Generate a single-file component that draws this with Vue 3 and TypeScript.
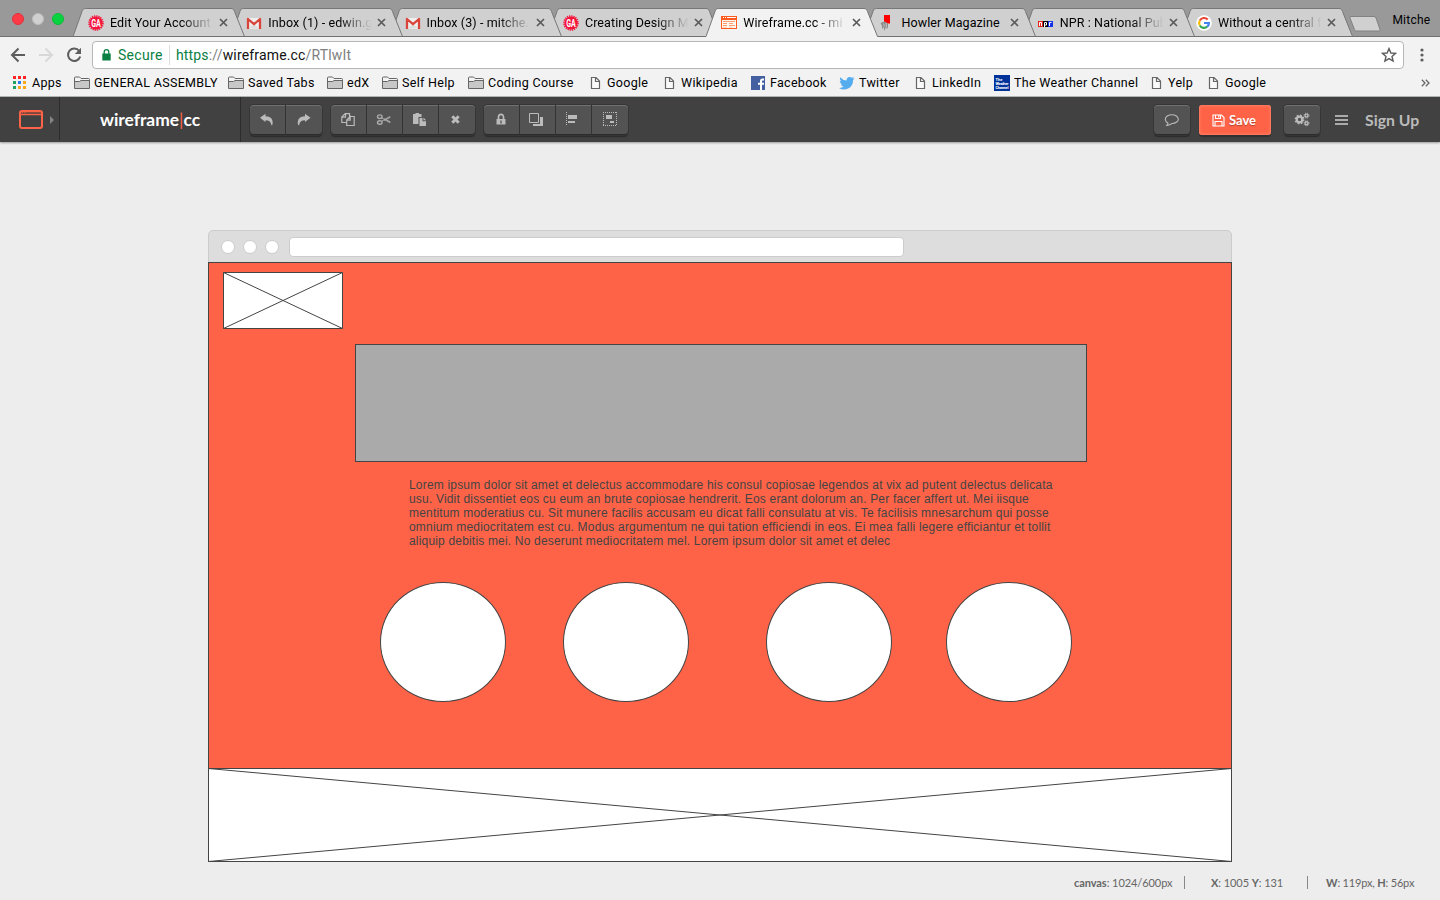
<script setup lang="ts">
interface Tab { title: string; icon: string; active?: boolean }
interface Mark { title: string; icon: string; width: number }

const tabs: Tab[] = [
  { title: 'Edit Your Account', icon: 'ga' },
  { title: 'Inbox (1) - edwin.g', icon: 'gmail' },
  { title: 'Inbox (3) - mitche.', icon: 'gmail' },
  { title: 'Creating Design M', icon: 'ga' },
  { title: 'Wireframe.cc - mi', icon: 'wire', active: true },
  { title: 'Howler Magazine', icon: 'howler' },
  { title: 'NPR : National Pub', icon: 'npr' },
  { title: 'Without a central f', icon: 'google' },
]

const marks: Mark[] = [
  { title: 'Apps', icon: 'apps', width: 61 },
  { title: 'GENERAL ASSEMBLY', icon: 'folder', width: 154 },
  { title: 'Saved Tabs', icon: 'folder', width: 99 },
  { title: 'edX', icon: 'folder', width: 55 },
  { title: 'Self Help', icon: 'folder', width: 86 },
  { title: 'Coding Course', icon: 'folder', width: 122 },
  { title: 'Google', icon: 'page', width: 74 },
  { title: 'Wikipedia', icon: 'page', width: 87 },
  { title: 'Facebook', icon: 'fb', width: 88 },
  { title: 'Twitter', icon: 'tw', width: 76 },
  { title: 'LinkedIn', icon: 'page', width: 79 },
  { title: 'The Weather Channel', icon: 'weather', width: 157 },
  { title: 'Yelp', icon: 'page', width: 57 },
  { title: 'Google', icon: 'page', width: 70 },
]

const groups = [['undo', 'redo'], ['copy', 'cut', 'paste', 'delete'], ['lock', 'order', 'align', 'group']]

const lines = [
  'Lorem ipsum dolor sit amet et delectus accommodare his consul copiosae legendos at vix ad putent delectus delicata',
  'usu. Vidit dissentiet eos cu eum an brute copiosae hendrerit. Eos erant dolorum an. Per facer affert ut. Mei iisque',
  'mentitum moderatius cu. Sit munere facilis accusam eu dicat falli consulatu at vis. Te facilisis mnesarchum qui posse',
  'omnium mediocritatem est cu. Modus argumentum ne qui tation efficiendi in eos. Ei mea falli legere efficiantur et tollit',
  'aliquip debitis mei. No deserunt mediocritatem mel. Lorem ipsum dolor sit amet et delec',
]

const circles = [443, 626, 829, 1009].map((x) => x - 208)
</script>

<template>
  <div class="screen">
    <header class="strip">
      <div class="lights"><i class="red" /><i class="grey" /><i class="green" /></div>
      <div class="tabs">
        <div v-for="(t, i) in tabs" :key="i" class="tab" :class="{ active: t.active }" :style="{ zIndex: t.active ? 20 : 10 - i }">
          <svg class="shape" width="173" height="29" viewBox="0 0 173 29">
            <path d="M0 28.5L9 3.5C9.700 1.500 10.400 .5 12.400 .5H158C160 .5 160.800 1.500 161.500 3.500L171.500 28.500V29H0Z" :fill="t.active ? '#f2f2f2' : '#d0d0d0'" />
            <path d="M0 28.5L9 3.5C9.700 1.500 10.400 .5 12.400 .5H158C160 .5 160.800 1.500 161.500 3.500L171.500 28.500" fill="none" stroke="#777" />
            <path v-if="!t.active" d="M0 28.500H172" stroke="#707070" />
          </svg>
          <span class="fav">
            <svg v-if="t.icon === 'ga'" width="16" height="16" viewBox="0 0 16 16">
              <circle cx="8" cy="8" r="6.6" fill="#f5143c" /><circle cx="8" cy="8" r="7" fill="none" stroke="#f5143c" stroke-width="1.6" stroke-dasharray="1.3 .9" />
              <text x="3.200" y="11.600" textLength="9.600" lengthAdjust="spacingAndGlyphs" class="ga">GA</text>
            </svg>
            <svg v-else-if="t.icon === 'gmail'" width="16" height="16" viewBox="0 0 16 16">
              <path d="M1 3H15V14H1Z" fill="#efefef" /><path d="M3 13.500L8 9L13 13.500Z" fill="#ddd" />
              <path d="M2 14V4L8 9.200L14 4V14" fill="none" stroke="#d9453a" stroke-width="2.300" stroke-linejoin="round" />
            </svg>
            <svg v-else-if="t.icon === 'wire'" width="17" height="16" viewBox="0 0 17 16">
              <path d="M0 1H16V14H0Z" fill="#ff5a1e" /><path d="M1 5H15V13H1Z" fill="#fff6f0" />
              <path d="M2 2.500h1M4 2.500h1M6 2.500h9" stroke="#fff" />
              <path d="M2 6.500H14M2 8.500H6M8 8.500H12M2 10.500H6M8 10.500H14" stroke="#ff9c70" /><path d="M2 12.300H6M8 12.300H11" stroke="#ffc3a5" stroke-width=".8" />
            </svg>
            <svg v-else-if="t.icon === 'howler'" width="16" height="18" viewBox="0 0 16 18">
              <path d="M5 1H11V9.500H8L5 7.500Z" fill="#f00" /><path d="M1.500 9.500Q3.500 7 7 8L9 10V13L8 15L7 12.500L5.500 17L4.500 12.500L3 15.500V11.500Z" fill="#8a8a8a" /><path d="M4.500 9.500L5.500 12.500M7 9L7.500 13" stroke="#ddd" stroke-width=".7" />
            </svg>
            <svg v-else-if="t.icon === 'npr'" width="16" height="16" viewBox="0 0 16 16">
              <path d="M0 6H5V12H0Z" fill="#e1251b" /><path d="M5 6H10V12H5Z" fill="#000" /><path d="M10 6H15V12H10Z" fill="#1733e8" />
              <path d="M1.500 11V7.500H3.500V11M6.500 12V7.500H8.500V10H7M11.500 11V7.500H13.500" fill="none" stroke="#fff" />
            </svg>
            <svg v-else width="16" height="16" viewBox="0 0 16 16">
              <circle cx="8" cy="8" r="7.800" fill="#fff" />
              <g fill="none" stroke-width="2.200"><path d="M11.700 4.600A4.900 4.900 0 0 0 3.800 5.500" stroke="#ea4335" /><path d="M3.800 5.500A4.900 4.900 0 0 0 3.800 10.500" stroke="#fbbc05" /><path d="M3.800 10.500A4.900 4.900 0 0 0 11.200 11.700" stroke="#34a853" /><path d="M11.200 11.700A4.900 4.900 0 0 0 12.900 8H8" stroke="#4285f4" /></g>
            </svg>
          </span>
          <span class="title" :class="{ whole: t.icon === 'howler' }">{{ t.title }}</span>
          <svg class="close" width="9" height="9" viewBox="0 0 9 9"><path d="M1 1L8 8M8 1L1 8" stroke="#5a5a5a" stroke-width="1.700" /></svg>
        </div>
      </div>
      <svg class="newtab" width="34" height="18" viewBox="0 0 34 18"><path d="M3 1.500H26Q27.500 1.500 28 3L32 14.500Q32.500 16 31 16H8.500Q7 16 6.500 14.500L2 3Q1.500 1.500 3 1.500Z" fill="#d0d0d0" stroke="#828282" /></svg>
      <span class="user">Mitche</span>
    </header>

    <div class="nav">
      <svg width="82" height="20" viewBox="0 0 82 20" fill="none" stroke-width="2">
        <path d="M15 10H2.500M8.500 3.500L2 10L8.500 16.500" stroke="#5d5d5d" /><path d="M29 10H41.500M35.500 3.500L42 10L35.500 16.500" stroke="#d8d8d8" />
        <path d="M69.200 6A6.200 6.200 0 1 0 70.200 11.500" stroke="#5d5d5d" /><path d="M71 2.800V9H64.800Z" fill="#5d5d5d" />
      </svg>
      <div class="omni">
        <svg width="9" height="12" viewBox="0 0 9 12"><path d="M0.300 4.500H8.700V11.500H.3Z" fill="#0b8043" /><path d="M2.200 5V3A2.300 2.300 0 0 1 6.800 3V5" fill="none" stroke="#0b8043" stroke-width="1.300" /></svg>
        <span class="secure">Secure</span><i class="bar" />
        <span class="url"><b>https</b>://<em>wireframe.cc</em>/RTlwIt</span>
        <svg class="star" width="16" height="16" viewBox="0 0 16 16"><path d="M8 1.600L9.900 6L14.600 6.400L11 9.500L12.100 14.100L8 11.600L3.900 14.100L5 9.500L1.400 6.400L6.100 6Z" fill="none" stroke="#5d5d5d" stroke-width="1.400" /></svg>
      </div>
      <svg class="dots" width="4" height="14" viewBox="0 0 4 14" fill="#5d5d5d"><circle cx="2" cy="2" r="1.600" /><circle cx="2" cy="7" r="1.600" /><circle cx="2" cy="12" r="1.600" /></svg>
    </div>

    <div class="marks">
      <div v-for="(m, i) in marks" :key="i" class="mark" :style="{ width: m.width + 'px' }">
        <svg v-if="m.icon === 'apps'" width="19" height="16" viewBox="0 0 19 16">
          <path d="M0 1h3v3h-3zM5 1h3v3h-3zM10 1h3v3h-3z" fill="#f22" /><path d="M0 6h3v3h-3zM0 11h3v3h-3z" fill="#1da462" /><path d="M5 6h3v3h-3z" fill="#2a7cf0" /><path d="M10 6h3v3h-3zM5 11h3v3h-3zM10 11h3v3h-3z" fill="#fba818" />
        </svg>
        <svg v-else-if="m.icon === 'folder'" width="20" height="16" viewBox="0 0 20 16">
          <path d="M.5 13.500V3Q.5 2 1.500 2H5.500L7 3.500H14.500Q15.500 3.500 15.500 4.500V13.500Z" fill="#f4f4f4" stroke="#666" /><path d="M1 6.500H5L6.500 5.500H15V13H1Z" fill="#c8c8c8" /><path d="M1 6.500H5.500L7 5.500H15.500" fill="none" stroke="#666" />
        </svg>
        <svg v-else-if="m.icon === 'page'" width="17" height="16" viewBox="0 0 17 16">
          <path d="M1.500 2.500H6L9.500 6V13.500H1.500ZM5.500 2.500V6.500H9.500" fill="#fafafa" stroke="#666" stroke-width="1.200" />
        </svg>
        <svg v-else-if="m.icon === 'fb'" width="19" height="16" viewBox="0 0 19 16">
          <path d="M0 1H14V15H0Z" fill="#4460a0" /><path d="M13 4.500H11.500Q10 4.500 10 6V15M7 8.800H13" fill="none" stroke="#fff" stroke-width="2" />
        </svg>
        <svg v-else-if="m.icon === 'tw'" width="20" height="16" viewBox="0 0 20 16">
          <path d="M15.500 3.500L14 5.200C14.300 10.500 10 14.500 5 14.500Q2.300 14.500 0 13Q3 13.200 4.700 11.600Q2.500 11.300 1.800 9.400H3.200Q.8 8.500 .7 6L2.100 6.500Q0 4.600 1.200 2.300Q3.800 5.400 7.700 5.600C7 2.500 10.500 .8 12.800 2.800L14.900 2L13.700 3.800Z" fill="#55acee" />
        </svg>
        <svg v-else width="20" height="16" viewBox="0 0 20 16"><path d="M0 0H16V16H0Z" fill="#003399" /><g class="twc"><text x="1.500" y="5.800">The</text><text x="1.500" y="10" textLength="13">Weather</text><text x="1.500" y="14.200" textLength="13">Channel</text></g></svg>
        <span>{{ m.title }}</span>
      </div>
      <svg class="more" width="9" height="8" viewBox="0 0 9 8"><path d="M.8 .8L4 4L.8 7.200M4.800 .8L8 4L4.800 7.200" fill="none" stroke="#666" stroke-width="1.300" /></svg>
    </div>

    <div class="app">
      <div class="logo">
        <svg width="35" height="20" viewBox="0 0 35 20"><rect x="1" y="1" width="22" height="17" rx="2" fill="none" stroke="#ff6347" stroke-width="2" /><path d="M1 4.500H23" stroke="#ff6347" stroke-width="1.500" /><path d="M2 2.700H22" stroke="#a04a3c" /><path d="M3 2.700h1M5.500 2.700h1" stroke="#ff6347" /><path d="M31 6L35 10L31 14Z" fill="#858585" /></svg>
      </div>
      <div class="brand">wireframe<i>|</i>cc</div>
      <div class="groups">
        <div v-for="(g, i) in groups" :key="i" class="group">
          <button v-for="n in g" :key="n">
            <svg width="16" height="16" viewBox="0 0 16 16" fill="#bbb">
              <path v-if="n === 'undo'" d="M1 5.800L6.500 1.800V4.200C11.500 4.300 14.500 7 13.500 12.500C13.300 13.500 12.500 13.500 12.300 12.700C11.800 9.500 9.800 8.200 6.500 8.200V10Z" />
              <path v-else-if="n === 'redo'" d="M14.500 5.800L9 1.800V4.200C4 4.300 1 7 2 12.500C2.200 13.500 3 13.500 3.200 12.700C3.700 9.500 5.700 8.200 9 8.200V10Z" />
              <path v-else-if="n === 'copy'" d="M6.500 10.500H1.800V5L5.200 1.600H9.500V5M5.500 1.600V5.200H1.800M10.200 4.500H14.200V13.500H6.700V8L10.200 4.500V8.200H6.700" fill="none" stroke="#bbb" stroke-width="1.200" />
              <g v-else-if="n === 'cut'" fill="none" stroke="#aaa"><ellipse cx="3.800" cy="4.700" rx="2.300" ry="1.800" stroke-width="1.400" /><ellipse cx="3.800" cy="10.500" rx="2.300" ry="1.800" stroke-width="1.400" /><path d="M5.500 5.800L13.800 10.700L14.200 9.800L8 6.700M5.500 9.400L13.800 4.500L14.200 5.400L8 8.500" /></g>
              <g v-else-if="n === 'paste'"><path d="M1 2H3.500V1H7V2H9.500V5H6.500V12H1Z" /><path d="M7.500 6H10.500V9.300H14V14H7.500Z" /><path d="M11.500 5.500L14 8.300H11.500Z" /></g>
              <path v-else-if="n === 'delete'" d="M3.300 4.300L9.700 10.700M9.700 4.300L3.300 10.700" stroke="#bbb" stroke-width="3" />
              <g v-else-if="n === 'lock'"><path d="M3.500 7H12.500V12.500H3.500Z" /><path d="M5.500 8V5A2.500 2.700 0 0 1 10.500 5V8" fill="none" stroke="#bbb" stroke-width="1.700" /><path d="M8 8.500V11.500" stroke="#555" stroke-width="1.300" /></g>
              <g v-else-if="n === 'order'"><path d="M.5 1.500H9.500V10.500H.5Z" fill="none" stroke="#bbb" /><path d="M11 5H14V14H4V12H11Z" /></g>
              <g v-else-if="n === 'align'"><path d="M1.500 0V14" stroke="#bbb" stroke-dasharray="1 1" /><path d="M3 3H12V7H3ZM3 9H10V11H3Z" /></g>
              <g v-else><path d="M1 .5H15M1 13.500H15M1.500 0V14M14.500 0V14" fill="none" stroke="#bbb" stroke-dasharray="1 1" /><path d="M4 3H10V7H4ZM8 9H12V11H8Z" /></g>
            </svg>
          </button>
        </div>
      </div>
      <div class="group chat"><button><svg width="16" height="16" viewBox="0 0 16 16"><path d="M7.800 2.700C11.300 2.700 14.300 4.700 14.300 7.200C14.300 9.700 11.300 11.500 8.100 11.500C6.300 12.500 4.300 13.500 2.800 13.400Q4 12.300 4 11Q1.300 9.700 1.300 7.200C1.300 4.700 4.300 2.700 7.800 2.700Z" fill="none" stroke="#bbb" stroke-width="1.100" /></svg></button></div>
      <button class="save"><svg width="13" height="13" viewBox="0 0 13 13" fill="none" stroke="#fff" stroke-width="1.100"><path d="M1 1H9.500L12 3.500V12H1ZM3.500 1V4.500H8.500V1M3 12V7.500H10V12M6.800 1.500V3.500" /></svg>Save</button>
      <div class="group gears"><button><svg width="16" height="16" viewBox="0 0 16 16" fill="none" stroke="#bbb"><circle cx="5.500" cy="7.500" r="2.800" stroke-width="2.200" /><circle cx="5.500" cy="7.500" r="4.200" stroke-width="1.500" stroke-dasharray="1.700 1.600" /><circle cx="12.500" cy="3.600" r="1.500" stroke-width="1.400" /><circle cx="12.500" cy="3.600" r="2.500" stroke-dasharray="1 1" /><circle cx="12.500" cy="11.300" r="1.500" stroke-width="1.400" /><circle cx="12.500" cy="11.300" r="2.500" stroke-dasharray="1 1" /></svg></button></div>
      <svg class="burger" width="13" height="12" viewBox="0 0 13 12"><path d="M0 2H13M0 6H13M0 10H13" stroke="#aaa" stroke-width="2" /></svg>
      <span class="signup">Sign Up</span>
    </div>

    <main>
      <div class="frame">
        <div class="chrome"><i /><i /><i /><span /></div>
        <div class="canvas">
          <svg class="pic" width="120" height="57" viewBox="0 0 120 57"><path d="M.5 .5H119.500V56.500H.5ZM.5 .5L119.500 56.500M119.500 .5L.5 56.500" fill="#fff" stroke="#444" /></svg>
          <div class="banner" />
          <div class="lorem"><p v-for="l in lines" :key="l">{{ l }}</p></div>
          <i v-for="x in circles" :key="x" class="circle" :style="{ left: x - 63 + 'px' }" />
          <svg class="foot" width="1024" height="94" viewBox="0 0 1024 94"><path d="M.5 .5H1023.500V93.500H.5ZM.5 .5L1023.500 93.500M1023.500 .5L.5 93.500" fill="#fff" stroke="#444" /></svg>
        </div>
      </div>
      <footer>
        <span class="s1"><b>canvas</b>: 1024/600px</span><span class="s2"><b>X</b>: 1005 <b>Y</b>: 131</span><span class="s3"><b>W</b>: 119px, <b>H</b>: 56px</span>
      </footer>
    </main>
  </div>
</template>

<style>
body { margin: 0; overflow: hidden; }
</style>
<style scoped>
* { box-sizing: border-box; }
.screen { width: 1440px; height: 900px; background: #ededed; font-family: Roboto, sans-serif; font-size: 13px; color: #000; display: flex; flex-direction: column; overflow: hidden; white-space: nowrap; }
svg { display: block; flex: none; }
.strip { height: 37px; flex: none; background: #999; border-bottom: 1px solid #707070; display: flex; }
.lights { display: flex; gap: 8px; padding: 13px 0 0 12px; width: 73px; flex: none; }
.lights i { width: 12px; height: 12px; border-radius: 50%; }
.red { background: #fc3b46; border: 1px solid #e3323c; }
.grey { background: #d0d0d0; border: 1px solid #bdbdbd; }
.green { background: #09d23f; border: 1px solid #08bd38; }
.tabs { display: flex; padding-top: 8px; height: 37px; }
.tab { width: 158.300px; height: 29px; position: relative; flex: none; display: flex; align-items: center; padding-left: 15px; }
.tab .shape { position: absolute; left: 0; top: 0; }
.fav { position: relative; width: 22px; flex: none; }
.title { position: relative; width: 108px; overflow: hidden; font-size: 12.500px; letter-spacing: .1px; -webkit-mask-image: linear-gradient(90deg, #000 66%, transparent 96%); mask-image: linear-gradient(90deg, #000 66%, transparent 96%); }
.title.whole { -webkit-mask-image: none; mask-image: none; }
.close { position: relative; margin-left: 1px; }
.ga { font: bold 10px Roboto, sans-serif; fill: #fff; }
.newtab { margin: 15px 0 0 9px; }
.user { margin: 13px 0 0 10px; font-size: 12px; letter-spacing: .25px; line-height: 14px; }
.nav { height: 36px; flex: none; background: #f2f2f2; display: flex; align-items: center; padding-left: 10px; }
.omni { width: 1312px; height: 28px; border: 1px solid #b6b6b6; border-radius: 4px; background: #fff; display: flex; align-items: center; padding: 0 6px 0 9px; font-size: 14px; }
.secure { color: #0b8043; margin-left: 7px; width: 45px; letter-spacing: .3px; }
.bar { width: 1px; height: 20px; background: #ddd; margin: 0 6px 0 6px; }
.url { color: #808080; letter-spacing: .16px; }
.url b { font-weight: 400; color: #0b8043; }
.url em { font-style: normal; color: #111; }
.star { margin-left: auto; }
.dots { margin-left: 16px; }
.marks { height: 24px; flex: none; background: #f2f2f2; border-bottom: 1px solid #b2b5b5; display: flex; align-items: center; padding: 0 0 4px 13px; font-size: 12.500px; letter-spacing: .3px; }
.mark { display: flex; align-items: center; flex: none; }
.twc { font: bold 4px Roboto, sans-serif; fill: #fff; letter-spacing: 0; }
.more { margin-left: auto; margin-right: 10px; }
.app { height: 45px; flex: none; background: #414141; display: flex; align-items: center; box-shadow: 0 1px 2px #999; font-family: Lato, sans-serif; }
.logo { width: 60px; height: 43px; align-self: flex-start; border-right: 1px solid #2c2c2c; padding: 13px 0 0 19px; }
.brand { width: 181px; height: 45px; line-height: 46px; border-right: 1px solid #2c2c2c; text-align: center; color: #fff; font-size: 17.400px; font-weight: 700; }
.brand i { color: #ff6347; font-style: normal; font-weight: 400; }
.groups { display: flex; gap: 9px; margin: 8px 0 0 9px; align-self: flex-start; }
.group { display: flex; height: 30px; border-radius: 4px; background: #535353; box-shadow: 0 0 0 1px #363636, 0 2px 1px #2b2b2b, inset 0 1px #707070, inset 0 -1px #2b2b2b; }
button { border: 0; padding: 0; margin: 0; background: none; width: 36px; display: flex; align-items: center; justify-content: center; }
.groups button:not(:last-child) { border-right: 1px solid #333; padding-right: 1px; }
.groups button:last-child { padding-right: 1px; }
.chat, .gears { align-self: flex-start; margin-top: 8px; }
.chat { margin-left: auto; }
.save { width: 72px; height: 30px; align-self: flex-start; border-radius: 3px; background: #ff6347; color: #fff; font: 700 13px Lato, sans-serif; gap: 4px; padding-right: 2px; margin: 8px 13px 0 9px; box-shadow: 0 2px 1px #303030, inset 0 0 3px #ff9a85; text-shadow: 0 1px 1px #b5402c; }
.burger { margin-left: 15px; }
.signup { width: 54px; margin: 0 21px 0 17px; color: #bbb; font-size: 15.800px; font-weight: 700; }
main { flex: 1; padding: 88px 0 0 208px; }
.frame { width: 1024px; height: 632px; }
.chrome { height: 33px; margin-bottom: -1px; background: #ddd; border: 1px solid #ccc; border-radius: 5px 5px 0 0; display: flex; align-items: center; padding-left: 12px; gap: 8px; }
.chrome i { width: 14px; height: 14px; border-radius: 50%; background: #fff; border: 1px solid #ccc; }
.chrome span { width: 615px; height: 20px; margin-left: 2px; background: #fff; border: 1px solid #ccc; border-radius: 4px; }
.canvas { height: 600px; background: #ff6347; border: 1px solid #444; position: relative; }
.canvas > * { position: absolute; }
.pic { left: 14px; top: 9px; }
.banner { left: 146px; top: 81px; width: 732px; height: 118px; background: #aaa; border: 1px solid #444; }
.lorem { left: 200px; top: 215px; font: 12px/14px "Liberation Sans", sans-serif; color: #444; letter-spacing: .18px; }
.lorem p { margin: 0; }
.circle { top: 319px; width: 126px; height: 120px; margin-left: -1px; border: 1px solid #444; border-radius: 50%; background: #fff; }
.foot { left: -1px; top: 505px; }
footer { display: flex; font: 11px/14px Lato, sans-serif; letter-spacing: -.07px; color: #666; margin-top: 14px; }
footer span { height: 13px; }
.s1 { margin-left: 866px; width: 111px; border-right: 1px solid #888; }
.s2 { width: 123px; padding-left: 26px; border-right: 1px solid #888; }
.s3 { padding-left: 18px; letter-spacing: -.18px; }
</style>
